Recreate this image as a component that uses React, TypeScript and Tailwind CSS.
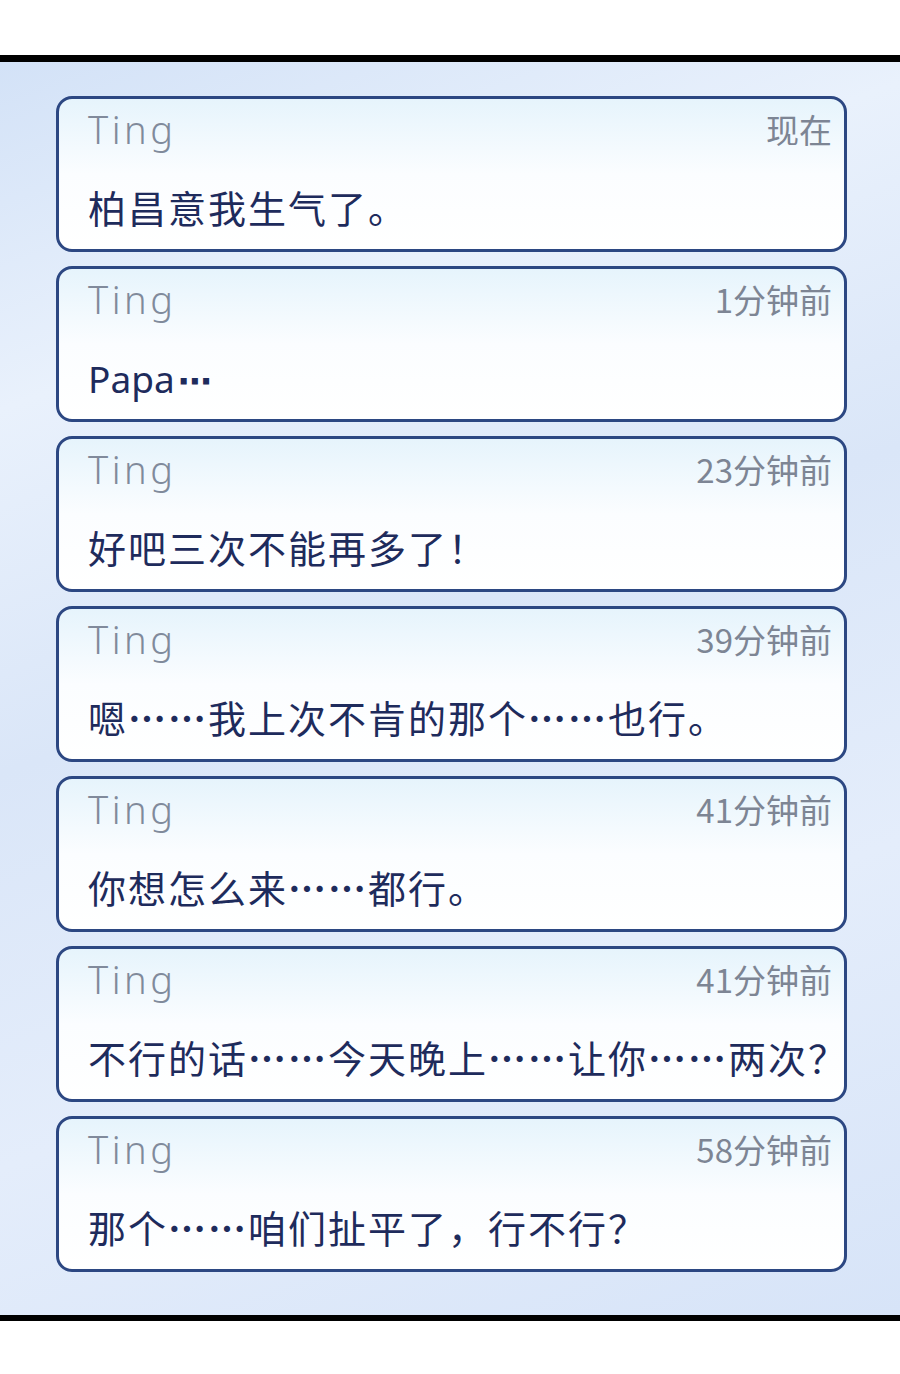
import React from "react";

const msgs = [
  { time: "现在", text: "柏昌意我生气了。" },
  { time: "1分钟前", text: "PAPA" },
  { time: "23分钟前", text: "好吧三次不能再多了！" },
  { time: "39分钟前", text: "嗯……我上次不肯的那个……也行。" },
  { time: "41分钟前", text: "你想怎么来……都行。" },
  { time: "41分钟前", text: "不行的话……今天晚上……让你……两次？" },
  { time: "58分钟前", text: "那个……咱们扯平了，行不行？" },
];

const font = { fontFamily: '"Noto Sans CJK SC", "Noto Sans", sans-serif' };

function Msg({ text }: { text: string }) {
  if (text === "PAPA") {
    return (
      <span className="tracking-normal">
        <span className="text-[37px]" style={{ fontFamily: '"Noto Sans", sans-serif' }}>Papa</span>
        <span className="text-[34px] font-bold ml-[3px]" style={{ fontFamily: '"DejaVu Sans", sans-serif' }}>⋯</span>
      </span>
    );
  }
  const parts = text.split("……");
  return (
    <>
      {parts.map((p, i) => (
        <React.Fragment key={i}>
          {p}
          {i < parts.length - 1 && <span className="font-bold">……</span>}
        </React.Fragment>
      ))}
    </>
  );
}

export default function App() {
  return (
    <div className="w-[900px] h-[1374px] bg-white flex flex-col" style={font}>
      <div className="h-[55px] bg-white" />
      <div className="h-[7px] bg-black" />
      <div className="h-[1253px] pt-[34px] pl-[56px] pr-[53px] flex flex-col gap-[14px] bg-[linear-gradient(160deg,#d3e2f7_0%,#e9f1fc_22%,#dae6f8_45%,#e4edfb_70%,#d7e4f8_100%)]">
        {msgs.map((m, i) => (
          <div
            key={i}
            className="h-[156px] rounded-[16px] border-[3px] border-[#2c4782] bg-linear-to-b from-[#e6f4fc] via-[#fbfdff] to-white pl-[29px] pr-[12px] pt-[13px] flex flex-col"
          >
            <div className="flex justify-between items-center h-[34px]">
              <span className="text-[38px] leading-none tracking-[3.5px] text-[#808a9b] font-light" style={{ fontFamily: '"Noto Sans", sans-serif' }}>
                Ting
              </span>
              <span className="text-[33px] leading-none text-[#7d8594]">{m.time}</span>
            </div>
            <div className="mt-[42px] text-[38px] leading-none text-[#1e2b5c] whitespace-nowrap tracking-[2px]">
              <Msg text={m.text} />
            </div>
          </div>
        ))}
      </div>
      <div className="h-[6px] bg-black" />
      <div className="flex-1 bg-white" />
    </div>
  );
}
